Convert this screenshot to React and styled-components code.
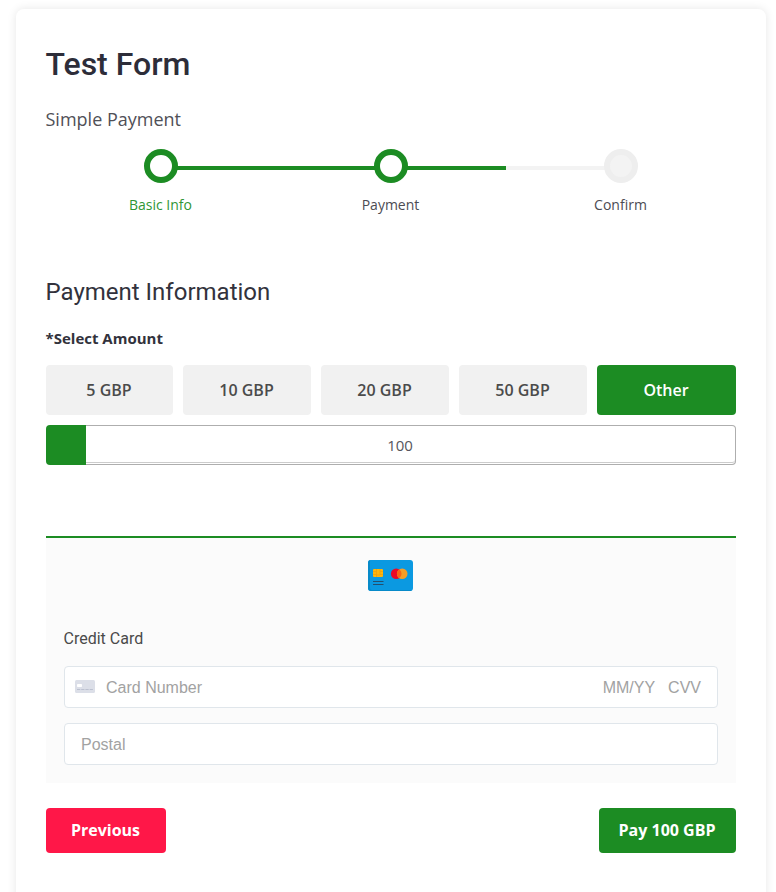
import React from "react";
import styled, { createGlobalStyle } from "styled-components";

const green = "#1c8c23";

const GlobalStyle = createGlobalStyle`
  * { box-sizing: border-box; }
  html, body { margin: 0; background: #fff; }
  body { height: 892px; overflow: hidden; font-family: "Open Sans", sans-serif; color: #32323c; }
  h1, h2, p { margin: 0; }
  button, input { font: inherit; }
`;

const Page = styled.main`
  height: 892px;
  padding: 9px 10.5px 0 15.5px;
  overflow: hidden;
`;

const Card = styled.form`
  height: 960px;
  padding: 30px;
  border-radius: 8px;
  background: #fff;
  box-shadow: 0 0 10px rgba(0, 0, 0, 0.1);
`;

const Title = styled.h1`
  font: 500 32px/50px Roboto, sans-serif;
  color: #2d2d39;
`;

const Subtitle = styled.p`
  margin-top: 17px;
  font-size: 18px;
  line-height: 26px;
  font-weight: 400;
  color: #505057;
`;

const Steps = styled.ol`
  display: grid;
  grid-template-columns: repeat(3, 1fr);
  margin: 17px 0 0;
  padding: 0;
  list-style: none;
`;

const Step = styled.li`
  display: flex;
  flex-direction: column;
  align-items: center;
  font-size: 14px;
  line-height: 20px;
  color: ${(p) => (p.$current ? "#2f9635" : "#4c4c53")};
`;

const Track = styled.div`
  display: grid;
  grid-template-columns: 1fr 34px 1fr;
  align-items: center;
  width: 100%;
  height: 34px;
`;

const Line = styled.span`
  height: 4px;
  margin: 4px -2px 0;
  background: ${(p) => ({ done: green, todo: "#f3f3f3", none: "transparent" })[p.$state]};
  ${(p) => (p.$side === "left" ? "margin-left: 0;" : "margin-right: 0;")}
`;

const Dot = styled.span`
  z-index: 1;
  width: 34px;
  height: 34px;
  border: 6px solid ${(p) => (p.$done ? green : "#eee")};
  border-radius: 50%;
  background: ${(p) => (p.$done ? "#fff" : "#f3f3f3")};
`;

const StepLabel = styled.span`
  margin-top: 12px;
`;

const SectionTitle = styled.h2`
  margin-top: 61px;
  font: 400 24px/32px Roboto, sans-serif;
  color: #32323c;
`;

const FieldLabel = styled.p`
  margin-top: 19px;
  font-size: 15px;
  line-height: 22px;
  font-weight: 700;
`;

const Amounts = styled.div`
  display: grid;
  grid-template-columns: 127px repeat(3, 128px) 139px;
  gap: 10px;
  margin-top: 16px;
`;

const AmountButton = styled.button`
  height: 50px;
  padding: 0;
  border: 0;
  border-radius: 4px;
  font-size: 16px;
  font-weight: 600;
  color: ${(p) => (p.$selected ? "#fff" : "#4b4b4b")};
  background: ${(p) => (p.$selected ? green : "#f1f1f1")};
`;

const CustomAmount = styled.label`
  display: flex;
  height: 40px;
  margin-top: 10px;
`;

const AmountMarker = styled.span`
  width: 40px;
  border-radius: 4px 0 0 4px;
  background: ${green};
`;

const AmountInput = styled.input`
  flex: 1;
  min-width: 0;
  padding: 0 20px 1px 0;
  border: 1px solid #aeaeae;
  border-left: 0;
  border-radius: 0 4px 4px 0;
  outline: 0;
  text-align: center;
  font-size: 15px;
  color: #55555c;
  box-shadow: inset 0 -1px 0 #fff, inset 0 -2px 0 #ccc;
`;

const PaymentPanel = styled.section`
  height: 247px;
  margin-top: 71px;
  padding: 22px 18px 0;
  border-top: 2px solid ${green};
  background: #fbfbfb;
`;

const CardBadge = styled.svg`
  display: block;
  width: 45px;
  height: 31px;
  margin: 0 auto;
`;

const MethodName = styled.p`
  margin-top: 36px;
  font: 400 16px/24px Roboto, sans-serif;
  color: #4a4a4a;
`;

const CardField = styled.div`
  display: flex;
  align-items: center;
  height: 42px;
  margin-top: ${(p) => p.$gap}px;
  padding: 1px 15.5px 0 ${(p) => (p.$withIcon ? 10.5 : 16.5)}px;
  border: 1px solid #e0e6eb;
  border-radius: 4px;
  background: #fff;
  font: 16px/20px "Liberation Sans", Arial, sans-serif;
  color: #a2a2a2;
`;

const SmallCard = styled.svg`
  width: 20px;
  height: 13px;
  margin: -3px 11px 0 0;
`;

const Expiry = styled.span`
  margin-left: auto;
  margin-right: 13px;
`;

const Actions = styled.footer`
  display: flex;
  justify-content: space-between;
  margin-top: 25px;
`;

const ActionButton = styled.button`
  width: ${(p) => p.$width}px;
  height: 45px;
  padding: 0 0 2px;
  border: 0;
  border-radius: 4px;
  color: #fff;
  font-size: 16px;
  font-weight: 700;
  background: ${(p) => (p.$back ? "#ff1748" : green)};
`;

const steps = [
  { label: "Basic Info", done: true, current: true, left: "none", right: "done" },
  { label: "Payment", done: true, left: "done", right: "done" },
  { label: "Confirm", done: false, left: "todo", right: "none" },
];

const amounts = ["5 GBP", "10 GBP", "20 GBP", "50 GBP", "Other"];

export default function App() {
  return (
    <>
      <GlobalStyle />
      <Page>
        <Card onSubmit={(e) => e.preventDefault()}>
          <Title>Test Form</Title>
          <Subtitle>Simple Payment</Subtitle>
          <Steps>
            {steps.map((s) => (
              <Step key={s.label} $current={s.current}>
                <Track>
                  <Line $side="left" $state={s.left} />
                  <Dot $done={s.done} />
                  <Line $side="right" $state={s.right} />
                </Track>
                <StepLabel>{s.label}</StepLabel>
              </Step>
            ))}
          </Steps>
          <SectionTitle>Payment Information</SectionTitle>
          <FieldLabel>*Select Amount</FieldLabel>
          <Amounts>
            {amounts.map((a) => (
              <AmountButton type="button" key={a} $selected={a === "Other"}>
                {a}
              </AmountButton>
            ))}
          </Amounts>
          <CustomAmount>
            <AmountMarker />
            <AmountInput defaultValue="100" />
          </CustomAmount>
          <PaymentPanel>
            <CardBadge viewBox="0 0 45 31">
              <rect width="45" height="31" rx="3" fill="#0b99e1" />
              <path d="M3 0H2.5Q0 0 0 3V28Q0 31 3 31H44L43 30H4Q2 30 2 28V2Q2 0 3 0Z" fill="#078ac9" />
              <rect x="5" y="9" width="10" height="8" rx="1" fill="#ffb60b" />
              <path d="M5 11.5H8M5 14.5H8M12 11.5H15M12 14.5H15M8.5 9V17M12 9V14.5M8.5 15H12" stroke="#ed9b10" strokeWidth=".7" fill="none" />
              <path d="M5 21.5H15.5M5 24.5H15.5" stroke="#244f6d" strokeWidth="1.2" />
              <circle cx="28.2" cy="13.7" r="5.3" fill="#eb0926" />
              <circle cx="34.2" cy="13.7" r="5.3" fill="#f79e27" />
              <path d="M31.2 9.3a5.3 5.3 0 0 1 0 8.8a5.3 5.3 0 0 1 0-8.8Z" fill="#fa6415" />
            </CardBadge>
            <MethodName>Credit Card</MethodName>
            <CardField $gap={15} $withIcon>
              <SmallCard viewBox="0 0 20 13">
                <rect width="20" height="13" rx="1.5" fill="#dcdfe8" />
                <rect x="2" y="4" width="5" height="3" rx=".7" fill="#fff" />
                <path d="M2 9.5H18" stroke="#bcc1d0" strokeWidth="1" strokeDasharray="3.3 .9" />
              </SmallCard>
              <span>Card Number</span>
              <Expiry>MM/YY</Expiry>
              <span>CVV</span>
            </CardField>
            <CardField $gap={15}>
              <span>Postal</span>
            </CardField>
          </PaymentPanel>
          <Actions>
            <ActionButton type="button" $back $width={120}>Previous</ActionButton>
            <ActionButton type="submit" $width={137}>Pay 100 GBP</ActionButton>
          </Actions>
        </Card>
      </Page>
    </>
  );
}
